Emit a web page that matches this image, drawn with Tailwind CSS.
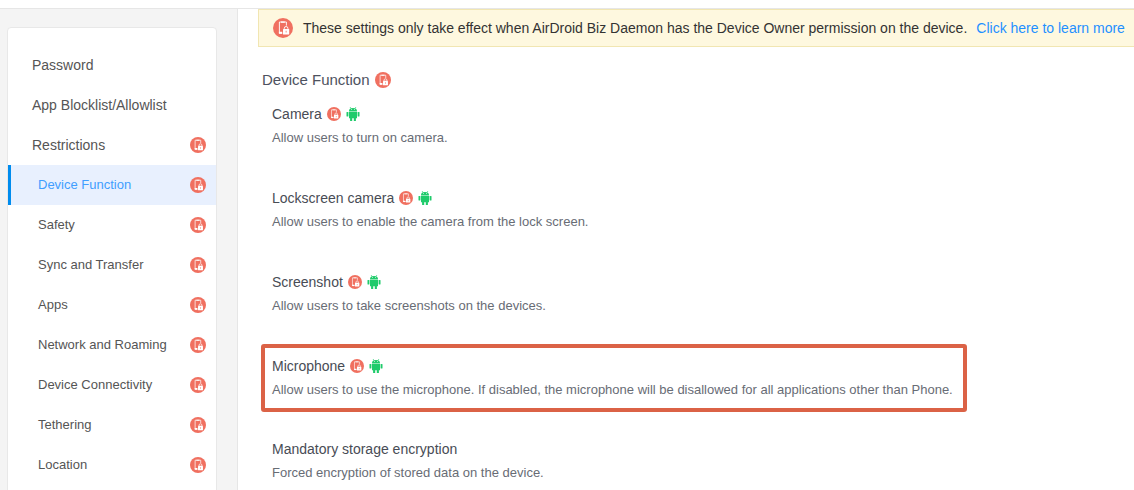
<!DOCTYPE html>
<html lang="en">
<head>
    <meta charset="UTF-8">
    <meta name="viewport" content="width=device-width, initial-scale=1.0">
    <script src="https://cdn.jsdelivr.net/npm/@tailwindcss/browser@4"></script>
    <title>Device Function</title>
</head>
<body class="bg-white font-['Liberation_Sans',Arial,sans-serif] text-sm">

    <svg class="hidden">
        <symbol id="owner" viewBox="0 0 20 20">
            <circle cx="10" cy="10" r="10" fill="#f07060"/>
            <path d="M9.2 15.2H6.4V4h7v3.6" fill="none" stroke="#fff" stroke-opacity=".9" stroke-width="1"/>
            <path d="M8 3.5h3.8v1.3H8zM5.9 13.8h3.3v2H5.9z" fill="#fff"/>
            <path d="M11.3 11.4v-1.1a1.8 1.8 0 0 1 3.6 0v1.1" fill="none" stroke="#fff" stroke-width=".9"/>
            <rect x="10" y="11" width="6.2" height="5.6" rx=".5" fill="#fff"/>
            <path d="M12.7 12.8h.8v1.8h-.8z" fill="#f07060"/>
        </symbol>
        <symbol id="android" viewBox="0 0 14 14">
            <path d="M3 4C3 2.3 4.4 1 7 1s4 1.3 4 3zM3 4.6h8v6.6H3zM4.1 11h2.1v3H4.1zM7.8 11h2.1v3H7.8z" fill="#1fcb6b"/>
            <rect x=".5" y="4.9" width="1.9" height="4.7" rx=".7" fill="#1fcb6b"/>
            <rect x="11.6" y="4.9" width="1.9" height="4.7" rx=".7" fill="#1fcb6b"/>
            <path d="M4.1.1l1 1.5M9.9.1l-1 1.5" stroke="#1fcb6b" stroke-width=".7"/>
            <path d="M5 2.3h.8v.8H5zM8.2 2.3H9v.8h-.8z" fill="#fff"/>
        </symbol>
    </svg>

    <div class="flex flex-col h-screen overflow-hidden">
        <div class="h-[9px] shrink-0 border-b border-[#e6e6e6]"></div>

        <div class="flex flex-1 min-h-0">
            <!-- sidebar -->
            <aside class="w-[238px] shrink-0 bg-[#f4f4f4] border-r border-[#e6e6e6] pl-[7px] pt-[18px] overflow-hidden">
                <ul class="w-[210px] h-[600px] pt-[17px] bg-white border border-[#e8e8e8] rounded text-[#555]">
                    <li class="h-10 pl-6 pr-2.5 flex items-center">Password</li>
                    <li class="h-10 pl-6 pr-2.5 flex items-center">App Blocklist/Allowlist</li>
                    <li class="h-10 pl-6 pr-2.5 flex items-center justify-between">Restrictions <svg class="size-4"><use href="#owner"/></svg></li>
                    <li class="h-10 pl-[27px] pr-2.5 flex items-center justify-between text-[13px] bg-[#e8f0fe] border-l-3 border-[#008cee] text-[#409eff]">Device Function <svg class="size-4"><use href="#owner"/></svg></li>
                    <li class="h-10 pl-[30px] pr-2.5 flex items-center justify-between text-[13px]">Safety <svg class="size-4"><use href="#owner"/></svg></li>
                    <li class="h-10 pl-[30px] pr-2.5 flex items-center justify-between text-[13px]">Sync and Transfer <svg class="size-4"><use href="#owner"/></svg></li>
                    <li class="h-10 pl-[30px] pr-2.5 flex items-center justify-between text-[13px]">Apps <svg class="size-4"><use href="#owner"/></svg></li>
                    <li class="h-10 pl-[30px] pr-2.5 flex items-center justify-between text-[13px]">Network and Roaming <svg class="size-4"><use href="#owner"/></svg></li>
                    <li class="h-10 pl-[30px] pr-2.5 flex items-center justify-between text-[13px]">Device Connectivity <svg class="size-4"><use href="#owner"/></svg></li>
                    <li class="h-10 pl-[30px] pr-2.5 flex items-center justify-between text-[13px]">Tethering <svg class="size-4"><use href="#owner"/></svg></li>
                    <li class="h-10 pl-[30px] pr-2.5 flex items-center justify-between text-[13px]">Location <svg class="size-4"><use href="#owner"/></svg></li>
                </ul>
            </aside>

            <main class="flex-1 min-w-0 pl-5 overflow-hidden">
                <div class="h-[38px] pl-3.5 flex items-center bg-[#fef8df] border border-r-0 border-[#f1e6b2] text-[#333] whitespace-nowrap">
                    <svg class="size-5 mr-2.5"><use href="#owner"/></svg>
                    These settings only take effect when AirDroid Biz Daemon has the Device Owner permission on the device.
                    <a href="#" class="ml-[9px] text-[#1e90ff]">Click here to learn more</a>
                </div>

                <h2 class="mt-[23px] h-5 pl-1 flex items-center gap-[5px] text-[15px] text-[#4d5260]">Device Function <svg class="size-4"><use href="#owner"/></svg></h2>

                <div class="pl-[3px] pt-1 whitespace-nowrap text-[#484c55]">
                    <section class="h-[84px] pl-[11px] pt-2.5">
                        <h3 class="h-5 flex items-center gap-[5px]">Camera <svg class="size-3.5"><use href="#owner"/></svg><svg class="size-3.5"><use href="#android"/></svg></h3>
                        <p class="mt-1 text-[13px] leading-5 text-[#686c75]">Allow users to turn on camera.</p>
                    </section>
                    <section class="h-[84px] pl-[11px] pt-2.5">
                        <h3 class="h-5 flex items-center gap-[5px]">Lockscreen camera <svg class="size-3.5"><use href="#owner"/></svg><svg class="size-3.5"><use href="#android"/></svg></h3>
                        <p class="mt-1 text-[13px] leading-5 text-[#686c75]">Allow users to enable the camera from the lock screen.</p>
                    </section>
                    <section class="h-[82px] pl-[11px] pt-2.5">
                        <h3 class="h-5 flex items-center gap-[5px]">Screenshot <svg class="size-3.5"><use href="#owner"/></svg><svg class="size-3.5"><use href="#android"/></svg></h3>
                        <p class="mt-1 text-[13px] leading-5 text-[#686c75]">Allow users to take screenshots on the devices.</p>
                    </section>
                    <section class="w-[706px] h-[68px] mb-[15px] pl-[7px] pt-2 border-4 border-[#db6246] rounded-[3px]">
                        <h3 class="h-5 flex items-center gap-[5px]">Microphone <svg class="size-3.5"><use href="#owner"/></svg><svg class="size-3.5"><use href="#android"/></svg></h3>
                        <p class="mt-1 text-[13px] leading-5 text-[#686c75]">Allow users to use the microphone. If disabled, the microphone will be disallowed for all applications other than Phone.</p>
                    </section>
                    <section class="h-[84px] pl-[11px] pt-3">
                        <h3 class="h-5 flex items-center">Mandatory storage encryption</h3>
                        <p class="mt-1 text-[13px] leading-5 text-[#686c75]">Forced encryption of stored data on the device.</p>
                    </section>
                </div>
            </main>
        </div>
    </div>

</body>
</html>
